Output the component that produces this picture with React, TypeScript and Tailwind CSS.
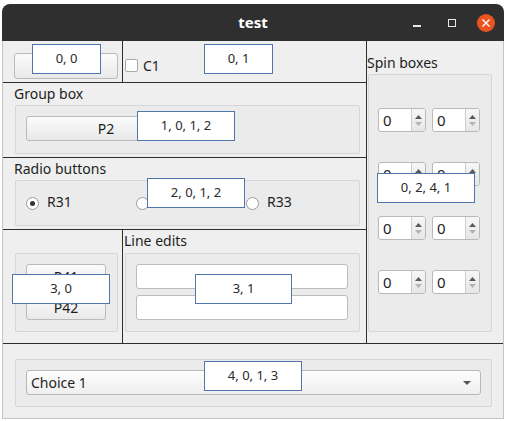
import React from "react";

// label boxes that sit over each grid cell
function Tag({ text, className }: { text: string; className: string }) {
  return (
    <div
      className={`absolute z-10 flex items-center justify-center border border-[#5077ad] bg-white pb-[1px] font-['Noto_Sans',sans-serif] text-[13px] text-[#2a2a2a] ${className}`}
    >
      {text}
    </div>
  );
}

const btn =
  "flex items-center justify-center rounded-[3px] border border-[#bababa] bg-gradient-to-b from-[#fbfbfb] to-[#e9e9e9] text-[14px]";
const frame = "rounded-[2px] border border-[#d6d6d6] bg-[#ebebeb]";
const line = "border-[#2e2e2e]";

function Spin() {
  return (
    <div className="flex h-[24px] w-[48px] overflow-hidden rounded-[3px] border border-[#b9b9b9] bg-white">
      <div className="flex flex-1 items-center pl-[4px] text-[15px] leading-none">0</div>
      <div className="flex w-[14px] flex-col items-center justify-center gap-[3px] border-l border-[#cdcdcd] bg-gradient-to-b from-[#f7f7f7] to-[#e6e6e6]">
        <svg width="7" height="4" viewBox="0 0 7 4">
          <path d="M0 4 L3.5 0 L7 4 Z" fill="#5a5a5a" />
        </svg>
        <svg width="7" height="4" viewBox="0 0 7 4">
          <path d="M0 0 L3.5 4 L7 0 Z" fill="#b3b3b3" />
        </svg>
      </div>
    </div>
  );
}

function Radio({ label, checked }: { label: string; checked?: boolean }) {
  return (
    <div className="flex w-[110px] items-center gap-[8px]">
      <div className="flex h-[13px] w-[13px] items-center justify-center rounded-full border border-[#9c9c9c] bg-white">
        {checked ? <div className="h-[5px] w-[5px] rounded-full bg-[#333]" /> : null}
      </div>
      <span className="-mt-[3px]">{label}</span>
    </div>
  );
}

export default function App() {
  return (
    <div className="h-[421px] w-[508px] bg-white pl-[2px] pt-[4px] font-['Noto_Sans',sans-serif] text-[14px] text-[#1e1e1e]">
      <div className="w-[502px] overflow-hidden rounded-t-[8px]">
        <div className="grid h-[37px] grid-cols-[1fr_auto_1fr] items-center bg-[#2f2f2f]">
          <div />
          <div className="pb-[1px] text-[15px] font-bold text-white">test</div>
          <div className="flex items-center justify-end pr-[9px]">
            <div className="mt-[6px] h-[2px] w-[8px] bg-[#e8e8e8]" />
            <div className="ml-[27px] h-[8px] w-[8px] border-[1.5px] border-[#e8e8e8]" />
            <div className="ml-[21px] flex h-[18px] w-[18px] items-center justify-center rounded-full bg-[#e95420]">
              <svg width="8" height="8" viewBox="0 0 8 8">
                <path d="M0.5 0.5 L7.5 7.5 M7.5 0.5 L0.5 7.5" stroke="white" strokeWidth="1.4" />
              </svg>
            </div>
          </div>
        </div>

        <div className="grid h-[378px] grid-cols-[120px_243px_137px] grid-rows-[42px_75px_72px_114px_74px] border-x border-b border-[#c4c4c4] bg-[#efefef]">
          {/* 0,0 */}
          <div className={`relative border-r border-b ${line} pl-[11px] pt-[12px]`}>
            <div className={`${btn} h-[26px] w-[104px] border-[#6f95c2]`} />
            <Tag text="0, 0" className="left-[29px] top-[3px] h-[30px] w-[69px]" />
          </div>

          {/* 0,1 */}
          <div className={`relative border-b ${line} flex items-start gap-[5px] pl-[2px] pt-[18px]`}>
            <div className="h-[13px] w-[13px] rounded-[2px] border border-[#a9a9a9] bg-white" />
            <span className="-mt-[4px] text-[14px]">C1</span>
            <Tag text="0, 1" className="left-[81px] top-[3px] h-[30px] w-[69px]" />
          </div>

          {/* 0,2,4,1 */}
          <div className={`relative col-start-3 row-span-4 row-start-1 border-l border-b ${line} pt-[12px]`}>
            <div className="h-[21px] leading-[20px]">Spin boxes</div>
            <div className={`${frame} ml-[1px] flex h-[258px] w-[124px] flex-col gap-[30px] pl-[9px] pt-[33px]`}>
              {[0, 1, 2, 3].map((r) => (
                <div key={r} className="flex gap-[6px]">
                  <Spin />
                  <Spin />
                </div>
              ))}
            </div>
            <Tag text="0, 2, 4, 1" className="left-[10px] top-[132px] h-[30px] w-[98px]" />
          </div>

          {/* 1,0,1,2 */}
          <div className={`relative col-span-2 border-b ${line} pt-[1px]`}>
            <div className="h-[21px] pl-[11px] leading-[20px]">Group box</div>
            <div className={`${frame} ml-[12px] h-[49px] w-[345px] pl-[10px] pt-[10px]`}>
              <div className={`${btn} h-[25px] w-[160px]`}>P2</div>
            </div>
            <Tag text="1, 0, 1, 2" className="left-[134px] top-[28px] h-[30px] w-[98px]" />
          </div>

          {/* 2,0,1,2 */}
          <div className={`relative col-span-2 border-b ${line} pt-[1px]`}>
            <div className="h-[21px] pl-[11px] leading-[20px]">Radio buttons</div>
            <div className={`${frame} ml-[12px] flex h-[46px] w-[345px] items-center pl-[10px]`}>
              <Radio label="R31" checked />
              <Radio label="R32" />
              <Radio label="R33" />
            </div>
            <Tag text="2, 0, 1, 2" className="left-[144px] top-[20px] h-[30px] w-[98px]" />
          </div>

          {/* 3,0 */}
          <div className={`relative border-r border-b ${line} pl-[12px] pt-[23px]`}>
            <div className={`${frame} flex h-[79px] w-[103px] flex-col gap-[6px] pl-[10px] pt-[10px]`}>
              <div className={`${btn} h-[25px] w-[80px]`}>P41</div>
              <div className={`${btn} h-[25px] w-[80px]`}>P42</div>
            </div>
            <Tag text="3, 0" className="left-[9px] top-[44px] h-[30px] w-[98px]" />
          </div>

          {/* 3,1 */}
          <div className={`relative border-b ${line} pt-[1px]`}>
            <div className="h-[22px] pl-[1px] leading-[20px]">Line edits</div>
            <div className={`${frame} ml-[2px] flex h-[79px] w-[235px] flex-col gap-[6px] pl-[10px] pt-[10px]`}>
              <div className="h-[25px] w-[212px] rounded-[3px] border border-[#bcbcbc] bg-white" />
              <div className="h-[25px] w-[212px] rounded-[3px] border border-[#bcbcbc] bg-white" />
            </div>
            <Tag text="3, 1" className="left-[72px] top-[44px] h-[30px] w-[97px]" />
          </div>

          {/* 4,0,1,3 */}
          <div className="relative col-span-3 pl-[12px] pt-[15px]">
            <div className={`${frame} h-[48px] w-[477px] pl-[10px] pt-[10px]`}>
              <div className="flex h-[25px] w-[455px] items-center justify-between rounded-[3px] border border-[#b8b8b8] bg-gradient-to-b from-[#fdfdfd] to-[#efefef] pl-[4px] pr-[9px]">
                <span>Choice 1</span>
                <svg width="8" height="4" viewBox="0 0 8 4">
                  <path d="M0 0 L4 4 L8 0 Z" fill="#555" />
                </svg>
              </div>
            </div>
            <Tag text="4, 0, 1, 3" className="left-[201px] top-[17px] h-[30px] w-[98px]" />
          </div>
        </div>
      </div>
    </div>
  );
}
